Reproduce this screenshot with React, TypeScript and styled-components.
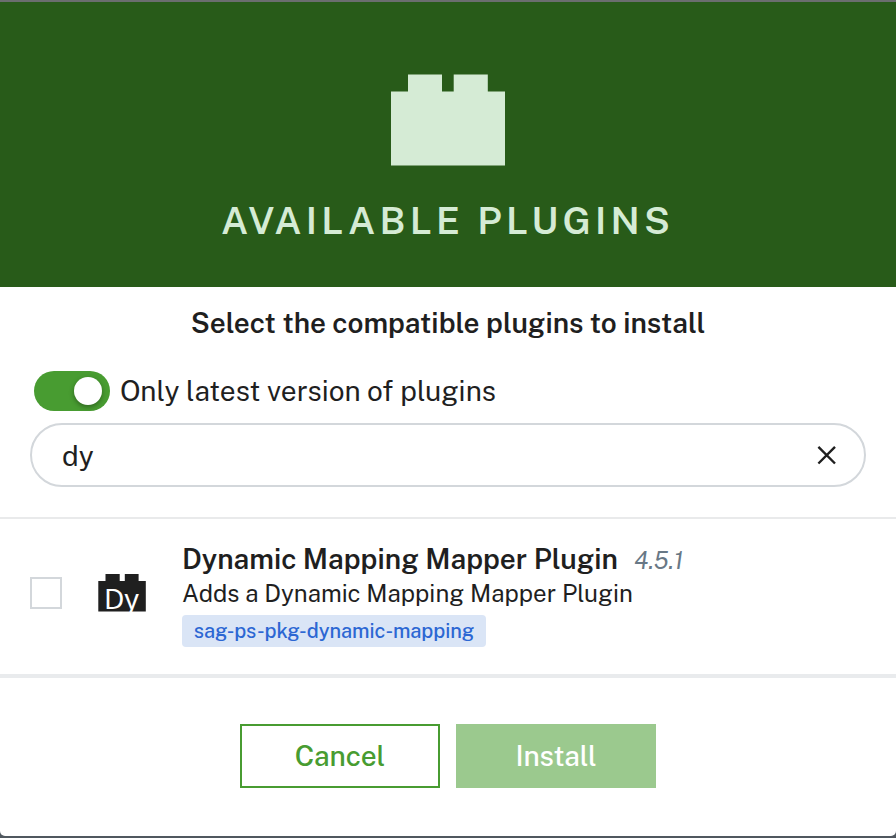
import React, { useState } from "react";
import styled, { createGlobalStyle } from "styled-components";

const GlobalStyle = createGlobalStyle`
  * { box-sizing: border-box; }
  body {
    margin: 0;
    background: #50585f;
    color: #1f1f1f;
    font-family: "Public Sans", Inter, "Liberation Sans", sans-serif;
    -webkit-font-smoothing: antialiased;
  }
  h1, h2, h3, p { margin: 0; }
`;

const Backdrop = styled.div`
  height: 838px;
  padding: 2px 0;
  background: linear-gradient(#6b6e6f 0 2px, #50585f 2px);
`;

const Dialog = styled.main`
  height: 834px;
  display: flex;
  flex-direction: column;
  overflow: hidden;
  background: #fff;
  border-radius: 0 0 5px 5px;
`;

const Header = styled.header`
  flex: none;
  height: 285px;
  padding-top: 72px;
  display: flex;
  flex-direction: column;
  align-items: center;
  background: #285b19;
  color: #d5ebd5;
`;

const Title = styled.h1`
  margin-top: 31px;
  padding-right: 1px;
  font-size: 38px;
  line-height: 48px;
  font-weight: 600;
  letter-spacing: 4.2px;
  white-space: nowrap;
`;

const Filters = styled.section`
  flex: none;
  height: 230px;
  padding: 18px 30px 0;
`;

const Heading = styled.h2`
  font-size: 28px;
  line-height: 36px;
  font-weight: 600;
  text-align: center;
  white-space: nowrap;
`;

const SwitchRow = styled.label`
  display: flex;
  align-items: center;
  gap: 10px;
  height: 40px;
  margin: 30px 0 12px 4px;
`;

const Track = styled.span<{ $on: boolean }>`
  display: flex;
  align-items: center;
  justify-content: ${(p) => (p.$on ? "flex-end" : "flex-start")};
  width: 76px;
  height: 40px;
  padding: 0 8px;
  border-radius: 20px;
  background: ${(p) => (p.$on ? "#489c31" : "#b5bbc0")};
`;

const Knob = styled.span`
  width: 28px;
  height: 28px;
  border-radius: 50%;
  background: #fff;
  box-shadow: 0 2px 5px rgba(0, 0, 0, 0.35);
`;

const SwitchText = styled.span`
  padding-bottom: 2px;
  font-size: 28px;
  white-space: nowrap;
`;

const HiddenInput = styled.input`
  display: none;
`;

const SearchBox = styled.div`
  display: flex;
  align-items: center;
  height: 64px;
  padding: 0 25px 0 30px;
  border: 2px solid #d3d7db;
  border-radius: 32px;
`;

const SearchInput = styled.input`
  flex: 1;
  min-width: 0;
  padding: 0;
  border: 0;
  outline: 0;
  background: none;
  color: inherit;
  font-family: inherit;
  font-size: 28px;
`;

const ClearButton = styled.button`
  display: flex;
  padding: 0;
  border: 0;
  background: none;
  color: #1f1f1f;
`;

const PluginRow = styled.section`
  flex: none;
  display: flex;
  height: 161px;
  padding-left: 30px;
  border-top: 2px solid #e9eaeb;
  border-bottom: 4px solid #e9ebed;
`;

const Checkbox = styled.input`
  appearance: none;
  width: 32px;
  height: 32px;
  margin: 58px 36px 0 0;
  border: 2px solid #d3d7db;
  background: #fff;
`;

const PluginIcon = styled.div`
  width: 48px;
  height: 38px;
  margin: 55px 36px 0 0;
`;

const PluginInfo = styled.div`
  padding-top: 22px;
`;

const NameLine = styled.div`
  display: flex;
  align-items: baseline;
  gap: 16px;
  height: 36px;
  line-height: 36px;
  white-space: nowrap;
`;

const PluginName = styled.h3`
  font-size: 28px;
  font-weight: 600;
`;

const Version = styled.em`
  color: #687886;
  font-size: 24px;
`;

const Description = styled.p`
  font-size: 24px;
  line-height: 32px;
  white-space: nowrap;
`;

const Tag = styled.span`
  display: flex;
  align-items: center;
  justify-content: center;
  width: 304px;
  height: 32px;
  margin-top: 6px;
  border-radius: 4px;
  background: #dae5f6;
  color: #2c67d3;
  font-size: 20px;
  font-weight: 500;
  letter-spacing: -0.07px;
  white-space: nowrap;
`;

const Footer = styled.footer`
  flex: 1;
  display: flex;
  justify-content: center;
  gap: 16px;
  padding-top: 46px;
`;

const Button = styled.button<{ $primary?: boolean }>`
  width: 200px;
  height: 64px;
  padding: 0 0 2px;
  border: 2px solid ${(p) => (p.$primary ? "#9bc98e" : "#489c31")};
  background: ${(p) => (p.$primary ? "#9bc98e" : "#fff")};
  color: ${(p) => (p.$primary ? "#fff" : "#489c31")};
  font-family: inherit;
  font-size: 28px;
  font-weight: 500;
  letter-spacing: -0.1px;
`;

const BrickText = styled.text`
  fill: #fff;
  font-family: "Noto Sans", "Open Sans", sans-serif;
  font-size: 28px;
  font-weight: 400;
`;

function BrickIcon() {
  return (
    <svg width="114" height="92" viewBox="0 0 114 92" fill="currentColor">
      <path d="M0 17.6H17V.5H51V17.6H62.7V.5H96.8V17.6H114V91.6H0Z" />
    </svg>
  );
}

function DyIcon() {
  return (
    <svg width="48" height="38" viewBox="0 0 48 38" overflow="visible">
      <path d="M.3 7H7.5V0H21.7V7H26.8V0H40.6V7H47.8V37.6H.3Z" fill="#1f1f1f" />
      <BrickText x="6" y="34.7">
        Dy
      </BrickText>
    </svg>
  );
}

function CloseIcon() {
  return (
    <svg width="24" height="24" viewBox="0 0 24 24" fill="none" stroke="currentColor" strokeWidth="2.4">
      <path d="M3.4 3.9 20 20.5M20 3.9 3.4 20.5" />
    </svg>
  );
}

export default function App() {
  const [latest, setLatest] = useState(true);
  const [query, setQuery] = useState("dy");

  return (
    <>
      <GlobalStyle />
      <Backdrop>
        <Dialog>
          <Header>
            <BrickIcon />
            <Title>AVAILABLE PLUGINS</Title>
          </Header>
          <Filters>
            <Heading>Select the compatible plugins to install</Heading>
            <SwitchRow>
              <HiddenInput type="checkbox" checked={latest} onChange={(e) => setLatest(e.target.checked)} />
              <Track $on={latest}>
                <Knob />
              </Track>
              <SwitchText>Only latest version of plugins</SwitchText>
            </SwitchRow>
            <SearchBox>
              <SearchInput value={query} onChange={(e) => setQuery(e.target.value)} aria-label="Search plugins" />
              <ClearButton aria-label="Clear" onClick={() => setQuery("")}>
                <CloseIcon />
              </ClearButton>
            </SearchBox>
          </Filters>
          <PluginRow>
            <Checkbox type="checkbox" aria-label="Dynamic Mapping Mapper Plugin" />
            <PluginIcon>
              <DyIcon />
            </PluginIcon>
            <PluginInfo>
              <NameLine>
                <PluginName>Dynamic Mapping Mapper Plugin</PluginName>
                <Version>4.5.1</Version>
              </NameLine>
              <Description>Adds a Dynamic Mapping Mapper Plugin</Description>
              <Tag>sag-ps-pkg-dynamic-mapping</Tag>
            </PluginInfo>
          </PluginRow>
          <Footer>
            <Button>Cancel</Button>
            <Button $primary>Install</Button>
          </Footer>
        </Dialog>
      </Backdrop>
    </>
  );
}
